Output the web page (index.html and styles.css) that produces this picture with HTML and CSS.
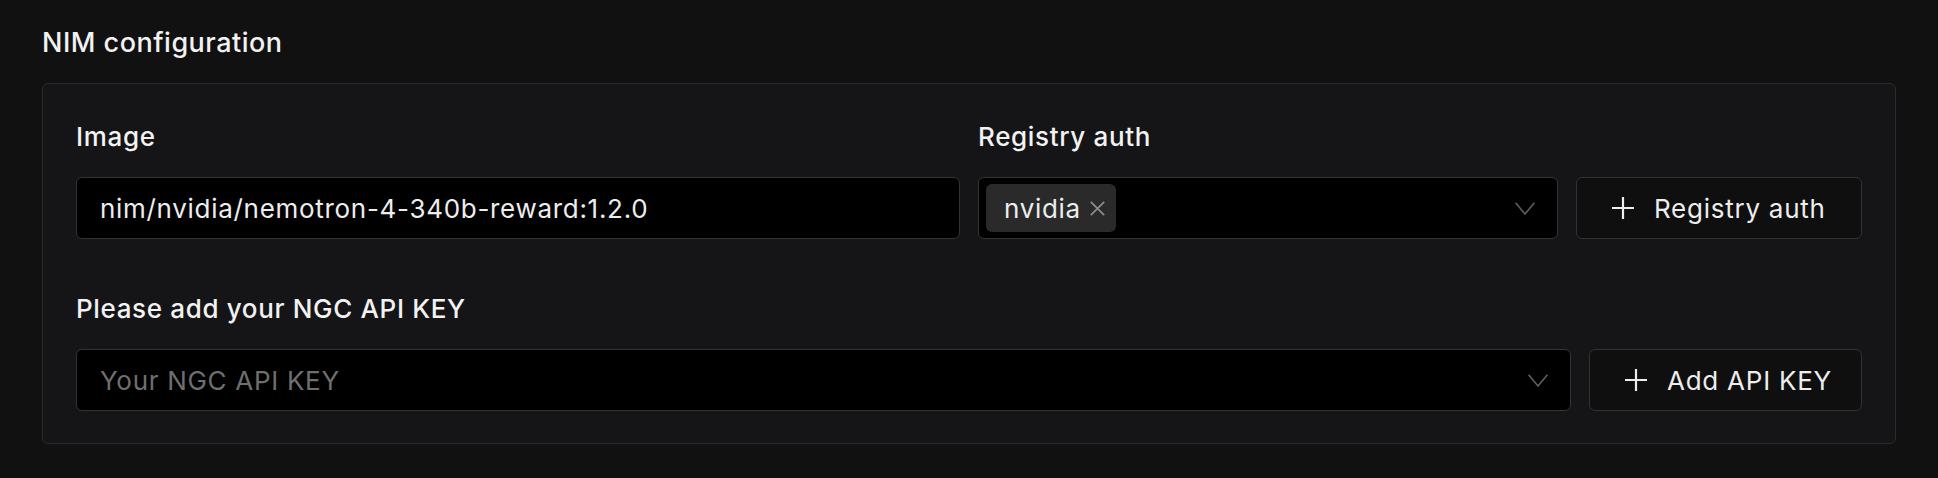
FILE: index.html
```html
<!DOCTYPE html>
<html lang="en">
<head>
<meta charset="utf-8">
<title>NIM configuration</title>
<link rel="stylesheet" href="styles.css">
</head>
<body>
<section class="section">
  <h2 class="section-title">NIM configuration</h2>
  <div class="card">
    <div class="row-grid">
      <div class="field">
        <label class="label">Image</label>
        <div class="input"><span class="value">nim/nvidia/nemotron-4-340b-reward:1.2.0</span></div>
      </div>
      <div class="field">
        <label class="label">Registry auth</label>
        <div class="inline">
          <div class="input select">
            <span class="chip"><span class="chip-text">nvidia</span>
              <svg class="chip-x" viewBox="0 0 15 15" width="15" height="15"><path d="M0.8 0.8 L14.2 14.2 M14.2 0.8 L0.8 14.2" stroke="currentColor" stroke-width="1.7" fill="none"/></svg>
            </span>
            <svg class="chevron" viewBox="0 0 20 13" width="20" height="13"><path d="M0.6 0.8 L10 12 L19.4 0.8" stroke="currentColor" stroke-width="1.6" fill="none"/></svg>
          </div>
          <button class="btn btn-registry">
            <svg class="plus" viewBox="0 0 22 22" width="22" height="22"><path d="M11 0 V22 M0 11 H22" stroke="currentColor" stroke-width="2.2" fill="none"/></svg>
            <span>Registry auth</span>
          </button>
        </div>
      </div>
    </div>
    <div class="field field-second">
      <label class="label">Please add your NGC API KEY</label>
      <div class="inline">
        <div class="input select">
          <span class="placeholder">Your NGC API KEY</span>
          <svg class="chevron" viewBox="0 0 20 13" width="20" height="13"><path d="M0.6 0.8 L10 12 L19.4 0.8" stroke="currentColor" stroke-width="1.6" fill="none"/></svg>
        </div>
        <button class="btn btn-key">
          <svg class="plus" viewBox="0 0 22 22" width="22" height="22"><path d="M11 0 V22 M0 11 H22" stroke="currentColor" stroke-width="2.2" fill="none"/></svg>
          <span>Add API KEY</span>
        </button>
      </div>
    </div>
  </div>
</section>
</body>
</html>
```
FILE: styles.css
```css
* { box-sizing: border-box; }
html, body { margin: 0; padding: 0; }
body {
  background: #111111;
  color: #eeeeee;
  font-family: Inter, "Noto Sans", sans-serif;
  width: 1938px;
  height: 478px;
  overflow: hidden;
}
.section {
  padding: 25px 42px 0 42px;
}
.section-title {
  margin: 0 0 22px 0;
  font-size: 27px;
  line-height: 36px;
  font-weight: 500;
  letter-spacing: 0.5px;
  color: #f2f2f2;
}
.card {
  background: #151517;
  border: 1px solid #2b2b2e;
  border-radius: 6px;
  padding: 37px 33px 32px 33px;
}
.row-grid {
  display: grid;
  grid-template-columns: 1fr 1fr;
  column-gap: 18px;
}
.field {
  display: flex;
  flex-direction: column;
}
.field-second {
  margin-top: 54px;
}
.label {
  font-size: 26px;
  line-height: 32px;
  font-weight: 500;
  letter-spacing: 0.65px;
  color: #f2f2f2;
  margin-bottom: 24px;
}
.inline {
  display: flex;
  gap: 18px;
}
.input {
  flex: 1;
  height: 62px;
  background: #000000;
  border: 1px solid #333336;
  border-radius: 6px;
  display: flex;
  align-items: center;
  padding: 0 23px;
  font-size: 26px;
  letter-spacing: 0.7px;
  color: #ededed;
}
.select {
  padding: 0 22px 0 7px;
  justify-content: space-between;
}
.select .placeholder {
  padding-left: 16px;
  color: #6f6f6f;
}
.chip {
  display: flex;
  align-items: center;
  height: 48px;
  background: #2a2a2b;
  border-radius: 6px;
  padding: 0 11px 0 18px;
  gap: 9px;
}
.chip-x { color: #8c8c8c; }
.chevron { color: #5f5f61; flex: none; }
.btn {
  height: 62px;
  background: #0f0f10;
  border: 1px solid #333336;
  border-radius: 6px;
  color: #ededed;
  font-family: inherit;
  font-size: 26px;
  letter-spacing: 0.75px;
  display: flex;
  align-items: center;
  gap: 20px;
  padding: 0 0 0 35px;
}
.btn-registry { width: 286px; }
.btn-key { width: 273px; }
.plus { color: #ededed; flex: none; }
```
